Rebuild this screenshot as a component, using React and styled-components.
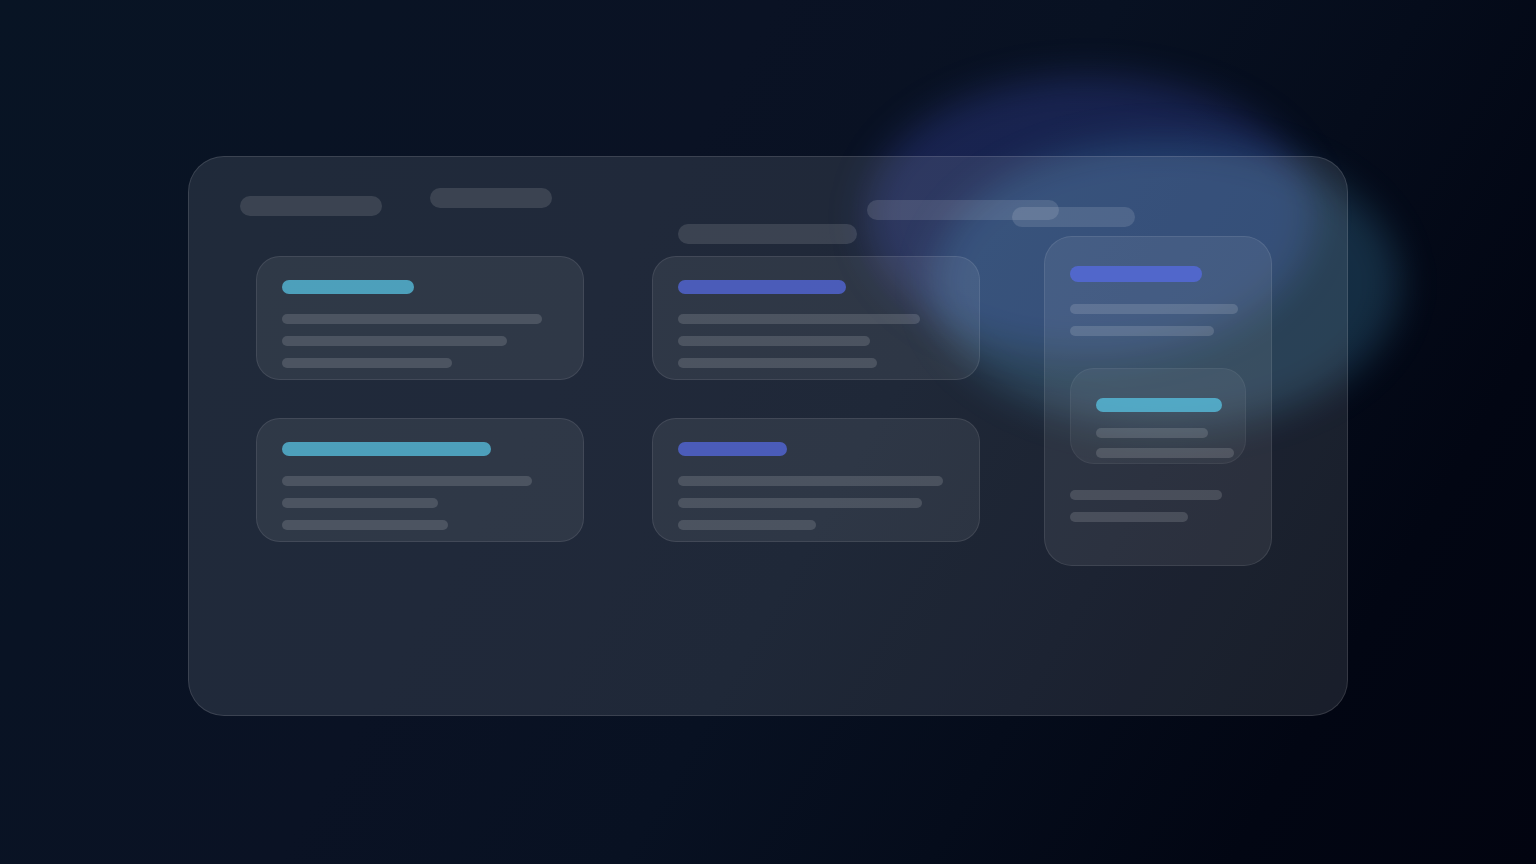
import styled, { createGlobalStyle } from 'styled-components';

const pills = [
  { width: 142, gap: 0, drop: 8 },
  { width: 122, gap: 48, drop: 0 },
  { width: 179, gap: 126, drop: 36 },
  { width: 192, gap: 10, drop: 12 },
  { width: 123, gap: -47, drop: 19 },
];

const cards = [
  { tone: 'cyan', title: 132, lines: [260, 225, 170] },
  { tone: 'indigo', title: 168, lines: [242, 192, 199] },
  { tone: 'cyan', title: 209, lines: [250, 156, 166] },
  { tone: 'indigo', title: 109, lines: [265, 244, 138] },
];

const App = () => {
  return (
    <Page>
      <GlobalStyle />
      <IndigoGlow />
      <CyanGlow />
      <Panel>
        <Header>
          {pills.map((pill) => (
            <Pill key={pill.width} $width={pill.width} $gap={pill.gap} $drop={pill.drop} />
          ))}
        </Header>
        <Body>
          <Cards>
            {cards.map((card) => (
              <Card key={card.title}>
                <Title $tone={card.tone} $width={card.title} />
                <Lines>
                  {card.lines.map((width) => (
                    <Line key={width} $width={width} />
                  ))}
                </Lines>
              </Card>
            ))}
          </Cards>
          <Sidebar>
            <SidebarTitle $tone="indigo" $width={132} />
            <Lines>
              <Line $width={168} />
              <Line $width={144} />
            </Lines>
            <Inset>
              <Title $tone="cyan" $width={126} />
              <InsetLines>
                <Line $width={112} />
                <Line $width={138} />
              </InsetLines>
            </Inset>
            <Lines>
              <Line $width={152} />
              <Line $width={118} />
            </Lines>
          </Sidebar>
        </Body>
      </Panel>
    </Page>
  );
};

const GlobalStyle = createGlobalStyle`
  * {
    box-sizing: border-box;
  }

  body {
    background: #020510;
    margin: 0;
  }
`;

const tones = {
  cyan: 'rgba(90, 204, 236, 0.7)',
  indigo: 'rgba(87, 108, 234, 0.7)',
};

const Page = styled.main`
  background: linear-gradient(
    120deg,
    #081424 0%,
    #0a1224 38%,
    #081122 55%,
    #050c1b 70%,
    #020613 85%,
    #020410 100%
  );
  display: flex;
  flex-direction: column;
  min-height: 100vh;
  overflow: hidden;
  padding: 156px 188px 148px;
  position: relative;
`;

const Glow = styled.div`
  border-radius: 50%;
  filter: blur(18px);
  left: 50%;
  position: absolute;
`;

const IndigoGlow = styled(Glow)`
  background: rgba(80, 100, 240, 0.22);
  height: 280px;
  margin-left: 98px;
  top: 76px;
  width: 448px;
`;

const CyanGlow = styled(Glow)`
  background: rgba(84, 184, 236, 0.2);
  height: 288px;
  margin-left: 164px;
  top: 140px;
  width: 468px;
`;

const Panel = styled.section`
  background: rgba(232, 244, 255, 0.1);
  border: 1px solid rgba(255, 255, 255, 0.12);
  border-radius: 36px;
  flex: 1;
  padding-top: 31px;
  position: relative;
`;

const Header = styled.header`
  align-items: flex-start;
  display: flex;
  height: 48px;
  padding: 0 51px;
`;

const Pill = styled.div`
  background: rgba(255, 255, 255, 0.12);
  border-radius: 10px;
  flex-shrink: 0;
  height: 20px;
  margin-left: ${({ $gap }) => $gap}px;
  margin-top: ${({ $drop }) => $drop}px;
  width: ${({ $width }) => $width}px;
`;

const Body = styled.div`
  align-items: flex-start;
  display: flex;
  gap: 64px;
  padding: 0 75px 0 67px;
`;

const Cards = styled.div`
  display: grid;
  flex: 1;
  gap: 38px 68px;
  grid-template-columns: 1fr 1fr;
  padding-top: 20px;
`;

const Card = styled.article`
  background: rgba(255, 255, 255, 0.07);
  border: 1px solid rgba(255, 255, 255, 0.09);
  border-radius: 24px;
  display: flex;
  flex-direction: column;
  gap: 20px;
  padding: 23px 25px 11px;
`;

const Title = styled.div`
  background: ${({ $tone }) => tones[$tone]};
  border-radius: 8px;
  height: 14px;
  width: ${({ $width }) => $width}px;
`;

const Lines = styled.div`
  display: flex;
  flex-direction: column;
  gap: 12px;
`;

const Line = styled.div`
  background: rgba(255, 255, 255, 0.14);
  border-radius: 5px;
  height: 10px;
  width: ${({ $width }) => $width}px;
`;

const Sidebar = styled.aside`
  background: rgba(255, 255, 255, 0.07);
  border: 1px solid rgba(255, 255, 255, 0.09);
  border-radius: 28px;
  padding: 29px 25px 43px;
  width: 228px;
`;

const SidebarTitle = styled(Title)`
  height: 16px;
  margin-bottom: 22px;
`;

const Inset = styled.div`
  background: rgba(255, 255, 255, 0.05);
  border: 1px solid rgba(255, 255, 255, 0.05);
  border-radius: 24px;
  margin: 32px 0 26px;
  padding: 29px 25px 5px;
`;

const InsetLines = styled(Lines)`
  gap: 10px;
  margin-top: 16px;
`;

export default App;
